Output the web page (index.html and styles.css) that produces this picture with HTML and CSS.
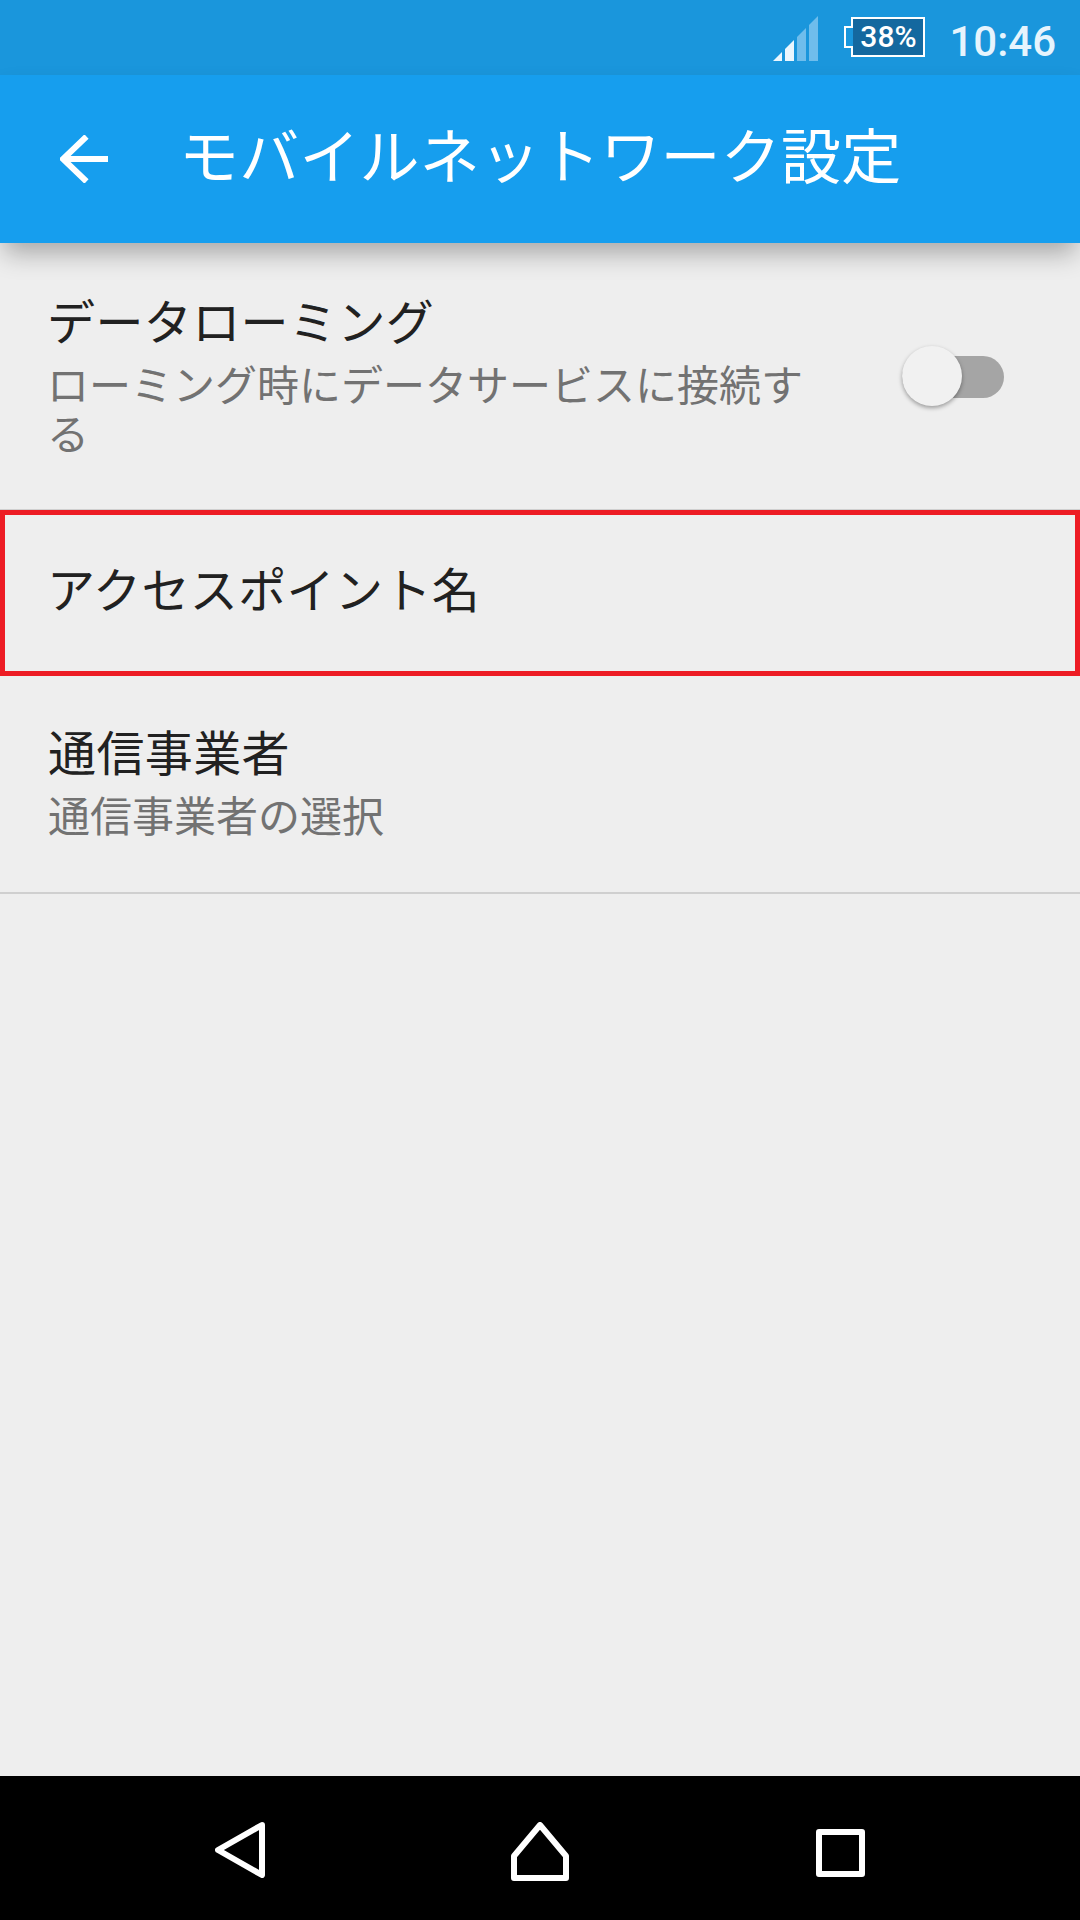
FILE: index.html
```html
<!DOCTYPE html>
<html lang="ja">
  <head>
    <meta charset="utf-8">
    <title>モバイルネットワーク設定</title>
    <link rel="stylesheet" href="styles.css">
  </head>
  <body>
    <div class="status-bar">
      <svg class="signal" width="45" height="45" viewBox="0 0 45 45">
        <path fill="#eaf6fe" d="M0 45 L9 45 L9 36 Z"/>
        <path fill="#eaf6fe" d="M12 45 L21 45 L21 24 L12 33 Z"/>
        <path fill="#6fbdec" d="M24 45 L33 45 L33 12 L24 21 Z"/>
        <path fill="#6fbdec" d="M36 45 L45 45 L45 0 L36 9 Z"/>
      </svg>
      <div class="battery">
        <svg width="81" height="40" viewBox="0 0 81 40">
          <rect x="9" y="2" width="70" height="36" fill="#14689f"/>
          <path d="M8 1 H80 V39 H8 V30 H1 V10 H8 Z" fill="none" stroke="#fff" stroke-width="2"/>
        </svg>
        <span class="battery-level">38%</span>
      </div>
      <span class="clock">10:46</span>
    </div>

    <header class="toolbar">
      <svg class="back-arrow" width="48" height="48" viewBox="0 0 48 48">
        <path d="M26.5 1.5 L3 24 L26.5 46.5 M3 24 H48" fill="none" stroke="#fff" stroke-width="6"/>
      </svg>
      <h1>モバイルネットワーク設定</h1>
    </header>

    <main class="settings">
      <section class="item roaming">
        <div class="item-text">
          <div class="item-title">データローミング</div>
          <div class="item-summary">ローミング時にデータサービスに接続する</div>
        </div>
        <div class="switch"><span class="switch-thumb"></span></div>
      </section>
      <section class="item apn">
        <div class="item-title">アクセスポイント名</div>
      </section>
      <section class="item carrier">
        <div class="item-title">通信事業者</div>
        <div class="item-summary">通信事業者の選択</div>
      </section>
    </main>

    <nav class="nav-bar">
      <svg width="50" height="56" viewBox="0 0 50 56">
        <path d="M47 3 L3 28 L47 53 Z" fill="none" stroke="#fff" stroke-width="6" stroke-linejoin="round"/>
      </svg>
      <svg width="58" height="59" viewBox="0 0 58 59">
        <path d="M29 3 L55 34 V56 H3 V34 Z" fill="none" stroke="#fff" stroke-width="6" stroke-linejoin="round"/>
      </svg>
      <svg width="49" height="48" viewBox="0 0 49 48">
        <rect x="3" y="3" width="43" height="42" fill="none" stroke="#fff" stroke-width="6" stroke-linejoin="round"/>
      </svg>
    </nav>
  </body>
</html>
```

FILE: styles.css
```css
* {
  box-sizing: border-box;
}

body {
  margin: 0;
  width: 1080px;
  height: 1920px;
  display: flex;
  flex-direction: column;
  background: #eeeeee;
  font-family: "Noto Sans CJK JP", "Noto Sans", sans-serif;
  overflow: hidden;
}

.status-bar {
  height: 75px;
  display: flex;
  align-items: flex-start;
  justify-content: flex-end;
  background: #1a96dc;
  padding: 16px 24px 0 0;
}

.signal {
  flex-shrink: 0;
}

.battery {
  position: relative;
  flex-shrink: 0;
  width: 81px;
  height: 40px;
  margin: 1px 0 0 26px;
}

.battery svg {
  display: block;
}

.battery-level {
  position: absolute;
  left: 9px;
  top: 0;
  width: 70px;
  color: #fff;
  font-family: Roboto, sans-serif;
  font-size: 30px;
  font-weight: 500;
  line-height: 40px;
  text-align: center;
}

.clock {
  flex-shrink: 0;
  margin: 1px 0 0 24px;
  color: #e6f4fd;
  font-family: Roboto, sans-serif;
  font-size: 42px;
  font-weight: 500;
  line-height: 49px;
}

.toolbar {
  position: relative;
  height: 168px;
  display: flex;
  align-items: center;
  background: #169eee;
  padding-left: 60px;
  box-shadow: 0 14px 24px -4px rgba(0, 0, 0, 0.3);
}

.toolbar h1 {
  margin: 0 0 12px 71px;
  color: #fff;
  font-size: 60px;
  font-weight: 400;
  line-height: 70px;
  letter-spacing: 0.2px;
}

.back-arrow {
  margin-top: -1px;
}

.settings {
  flex: 1;
}

.item {
  padding: 0 47px;
}

.roaming {
  height: 267px;
  display: flex;
  justify-content: space-between;
  padding-top: 46px;
  border-bottom: 1px solid #cfcfcf;
}

.item-text {
  width: 765px;
}

.item-title {
  color: #212121;
  font-size: 48px;
  line-height: 60px;
  letter-spacing: 0.4px;
}

.item-summary {
  margin-top: 9px;
  color: #727272;
  font-size: 42px;
  line-height: 49px;
}

.switch {
  position: relative;
  width: 102px;
  height: 42px;
  margin: 67px 29px 0 0;
  border-radius: 21px;
  background: #a5a5a5;
}

.switch-thumb {
  position: absolute;
  left: 0;
  top: -10px;
  width: 60px;
  height: 60px;
  border-radius: 50%;
  background: #f1f1f1;
  box-shadow: 0 2px 4px rgba(0, 0, 0, 0.35);
}

.apn {
  height: 166px;
  display: flex;
  align-items: center;
  padding: 0 0 12px 42px;
  border: 5px solid #ed1c24;
}

.carrier {
  height: 218px;
  padding: 44px 48px 0;
  border-bottom: 2px solid #cfcfcf;
}

.nav-bar {
  height: 144px;
  display: flex;
  align-items: flex-start;
  background: #000;
  padding: 46px 0 0 215px;
}

.nav-bar svg:nth-child(2) {
  margin-left: 246px;
}

.nav-bar svg:nth-child(3) {
  margin: 7px 0 0 247px;
}
```
